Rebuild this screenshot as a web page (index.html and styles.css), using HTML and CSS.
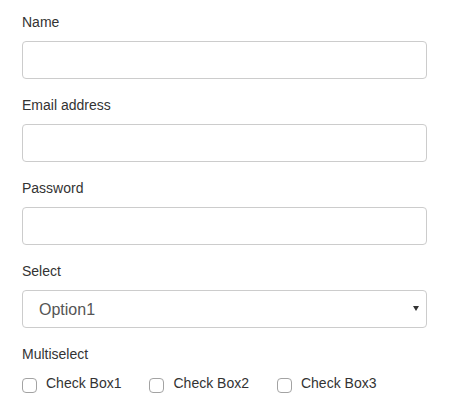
FILE: index.html
```html
<!DOCTYPE html>
<html>
<head>
<meta charset="utf-8">
<link rel="stylesheet" href="styles.css">
</head>
<body>
<form class="form">
  <div class="group">
    <label class="label" for="name">Name</label>
    <input class="control" id="name" type="text">
  </div>
  <div class="group">
    <label class="label" for="email">Email address</label>
    <input class="control" id="email" type="email">
  </div>
  <div class="group">
    <label class="label" for="pw">Password</label>
    <input class="control" id="pw" type="password">
  </div>
  <div class="group">
    <label class="label" for="sel">Select</label>
    <div class="select-wrap">
      <select class="control select" id="sel">
        <option>Option1</option>
        <option>Option2</option>
      </select>
      <span class="caret"></span>
    </div>
  </div>
  <div class="group-multi">
    <div class="label">Multiselect</div>
    <div class="checks">
      <label class="check"><input type="checkbox" class="box"><span>Check Box1</span></label>
      <label class="check"><input type="checkbox" class="box"><span>Check Box2</span></label>
      <label class="check"><input type="checkbox" class="box"><span>Check Box3</span></label>
    </div>
  </div>
</form>
</body>
</html>
```

FILE: styles.css
```css
html, body {
  margin: 0;
  padding: 0;
  background: #fff;
}
body {
  font-family: "Liberation Sans", Arial, sans-serif;
  font-size: 14px;
  line-height: 20px;
  color: #333;
}
.form {
  width: 405px;
  padding: 12px 0 0 22px;
}
.group {
  display: flex;
  flex-direction: column;
  margin-bottom: 16px;
}
.label {
  display: block;
  font-size: 14px;
  line-height: 20px;
  margin-bottom: 9px;
  color: #333;
}
.control {
  box-sizing: border-box;
  width: 405px;
  height: 38px;
  margin: 0;
  border: 1px solid #ccc;
  border-radius: 4px;
  background: #fff;
  font-family: "Liberation Sans", Arial, sans-serif;
  font-size: 16px;
  color: #555;
  padding: 6px 12px;
  outline: none;
}
.select-wrap {
  position: relative;
  width: 405px;
}
.select {
  appearance: none;
  -webkit-appearance: none;
  padding-left: 16px;
  display: block;
}
.caret {
  position: absolute;
  right: 8px;
  top: 16px;
  width: 0;
  height: 0;
  border-left: 3px solid transparent;
  border-right: 3px solid transparent;
  border-top: 5px solid #333;
  pointer-events: none;
}
.group-multi .label {
  margin-bottom: 9px;
}
.checks {
  display: flex;
}
.check {
  display: flex;
  align-items: center;
  margin-right: 28px;
  line-height: 20px;
}
.box {
  appearance: none;
  -webkit-appearance: none;
  box-sizing: border-box;
  width: 15px;
  height: 15px;
  margin: 4px 9px 0 0;
  border: 1px solid #a3a3a3;
  border-radius: 4px;
  background: #fff;
}
```
